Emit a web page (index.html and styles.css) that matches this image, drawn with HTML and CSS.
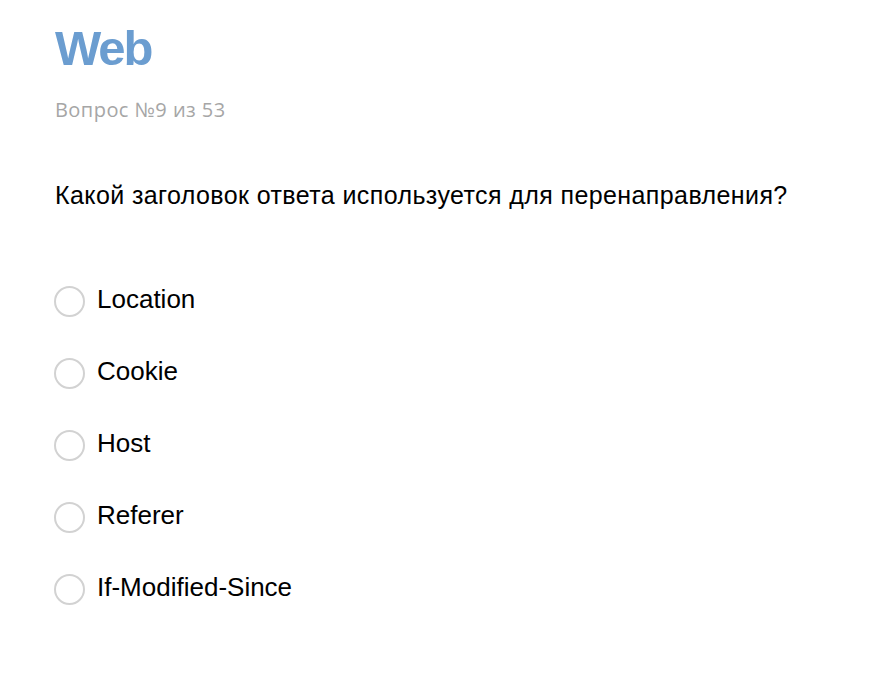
FILE: index.html
```html
<!DOCTYPE html>
<html lang="ru">
<head>
<meta charset="utf-8">
<title>Web — Вопрос №9 из 53</title>
<link rel="stylesheet" href="styles.css">
</head>
<body>
<main class="quiz">
  <h1 class="quiz-title">Web</h1>
  <div class="quiz-progress">Вопрос №9 из 53</div>
  <p class="quiz-question">Какой заголовок ответа используется для перенаправления?</p>
  <ul class="quiz-options">
    <li class="option"><span class="option-radio"></span><span class="option-text">Location</span></li>
    <li class="option"><span class="option-radio"></span><span class="option-text">Cookie</span></li>
    <li class="option"><span class="option-radio"></span><span class="option-text">Host</span></li>
    <li class="option"><span class="option-radio"></span><span class="option-text">Referer</span></li>
    <li class="option"><span class="option-radio"></span><span class="option-text">If-Modified-Since</span></li>
  </ul>
</main>
</body>
</html>
```
FILE: styles.css
```css
html, body {
  margin: 0;
  padding: 0;
  background: #ffffff;
}
body {
  font-family: "Liberation Sans", Arial, sans-serif;
  color: #000000;
}
.quiz {
  padding: 23px 0 0 55px;
}
.quiz-title {
  margin: 0;
  font-size: 49px;
  line-height: 50px;
  font-weight: bold;
  color: #6b9dd0;
  letter-spacing: -2px;
}
.quiz-progress {
  margin-top: 27px;
  font-family: "Open Sans", sans-serif;
  font-size: 20px;
  line-height: 20px;
  letter-spacing: 0.45px;
  color: #a6a6a6;
}
.quiz-question {
  margin: 63px 0 0 0;
  font-size: 25px;
  line-height: 25px;
  letter-spacing: 0.4px;
}
.quiz-options {
  list-style: none;
  margin: 78px 0 0 0;
  padding: 0;
  display: flex;
  flex-direction: column;
  gap: 41px;
}
.option {
  display: flex;
  align-items: center;
  height: 31px;
}
.option-radio {
  box-sizing: border-box;
  width: 31px;
  height: 31px;
  margin-left: -1px;
  border: 2px solid #d2d2d2;
  border-radius: 50%;
  flex: none;
}
.option-text {
  margin-left: 12px;
  font-size: 26px;
  line-height: 26px;
  padding-bottom: 6px;
}
```
